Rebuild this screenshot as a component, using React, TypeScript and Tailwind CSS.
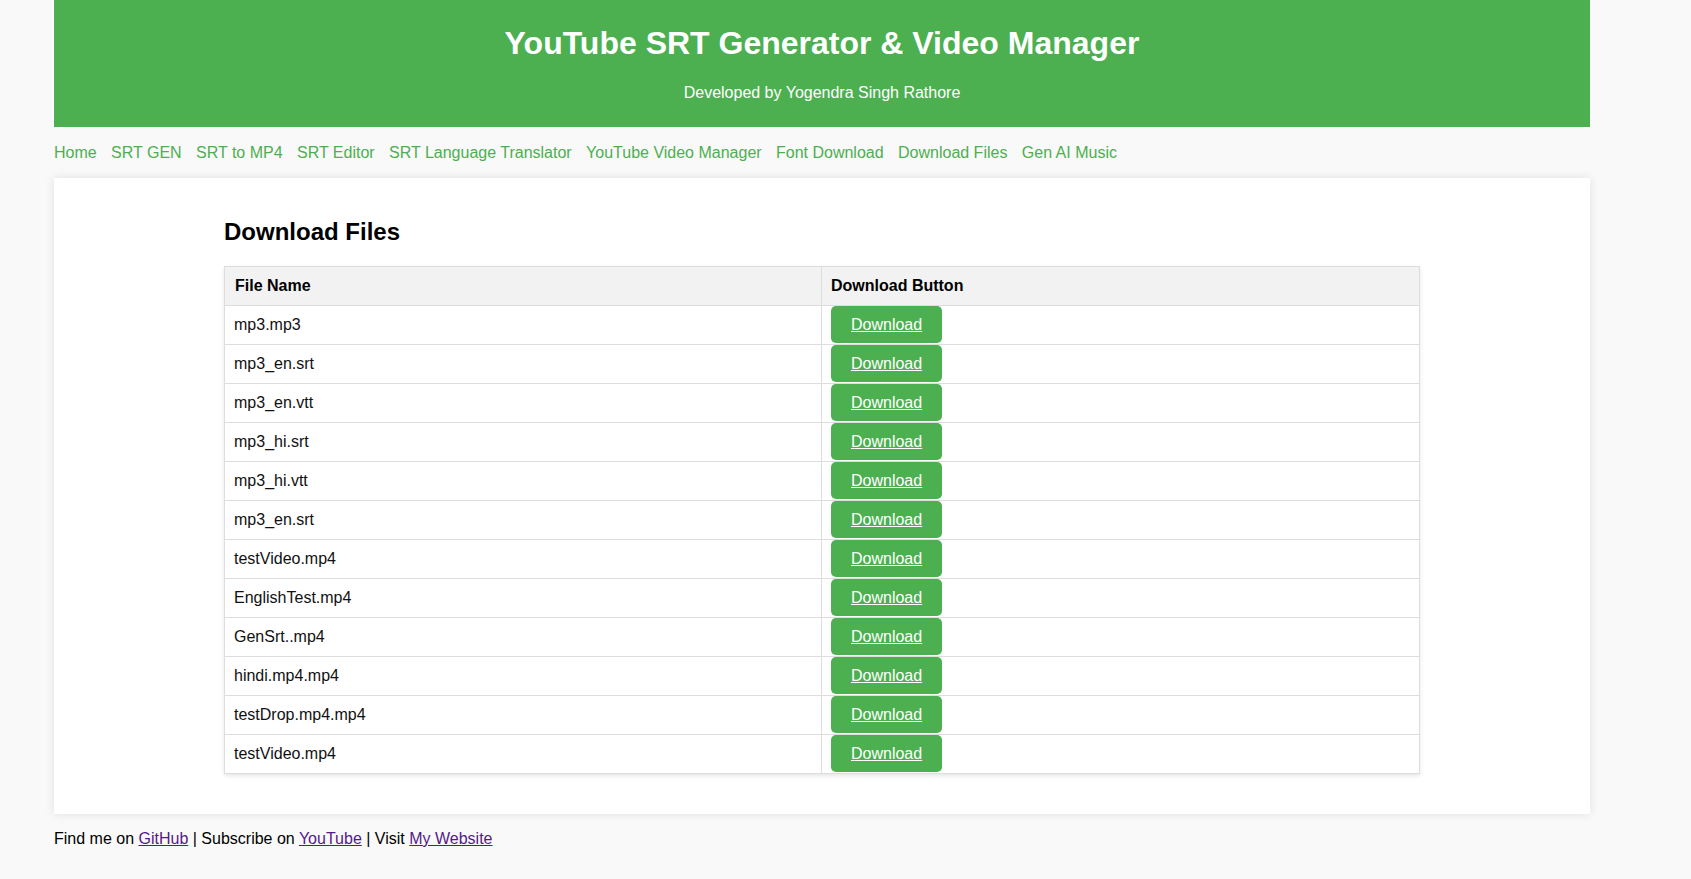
import React from "react";

const navItems = [
  "Home",
  "SRT GEN",
  "SRT to MP4",
  "SRT Editor",
  "SRT Language Translator",
  "YouTube Video Manager",
  "Font Download",
  "Download Files",
  "Gen AI Music",
];

const files = [
  "mp3.mp3",
  "mp3_en.srt",
  "mp3_en.vtt",
  "mp3_hi.srt",
  "mp3_hi.vtt",
  "mp3_en.srt",
  "testVideo.mp4",
  "EnglishTest.mp4",
  "GenSrt..mp4",
  "hindi.mp4.mp4",
  "testDrop.mp4.mp4",
  "testVideo.mp4",
];

export default function App() {
  return (
    <div
      className="min-h-[879px] bg-[#f9f9f9] text-black"
      style={{ fontFamily: '"Liberation Sans", Arial, sans-serif' }}
    >
      <div className="ml-[54px] w-[1536px]">
        <header className="flex h-[127px] flex-col items-center bg-[#4caf50] text-white">
          <h1 className="mt-[25px] text-[32px] font-bold leading-[37px]">
            YouTube SRT Generator &amp; Video Manager
          </h1>
          <p className="mt-[22px] text-[16px] leading-[18px]">
            Developed by Yogendra Singh Rathore
          </p>
        </header>

        <nav className="mt-[17px] flex h-[18px] gap-[14.4px] text-[16px] leading-[18px] text-[#4caf50]">
          {navItems.map((n) => (
            <a key={n} href="#" className="whitespace-nowrap">
              {n}
            </a>
          ))}
        </nav>

        <main className="mt-[16px] bg-white pb-[40px] pt-[40px] shadow-[0_0_10px_rgba(0,0,0,0.1)]">
          <div className="mx-auto w-[1196px]">
            <h2 className="text-[24px] font-bold leading-[28px]">Download Files</h2>
            <div className="mt-[20px] border border-[#dddddd] shadow-[0_2px_4px_rgba(0,0,0,0.1)]">
              <div className="grid h-[38px] grid-cols-2 bg-[#f2f2f2] text-[16px] font-bold leading-[18px]">
                <div className="flex items-center border-r border-[#dddddd] px-[10px]">File Name</div>
                <div className="flex items-center px-[9px]">Download Button</div>
              </div>
              {files.map((f, i) => (
                <div
                  key={i}
                  className="grid h-[39px] grid-cols-2 border-t border-[#dddddd] text-[16px] leading-[18px]"
                >
                  <div className="flex items-center border-r border-[#dddddd] px-[9px] text-[#111]">
                    {f}
                  </div>
                  <div className="px-[9px]">
                    <a
                      href="#"
                      className="inline-flex h-[37px] items-center rounded-[5px] bg-[#4caf50] px-[20px] text-white underline"
                    >
                      Download
                    </a>
                  </div>
                </div>
              ))}
            </div>
          </div>
        </main>

        <footer className="mt-[16px] text-[16px] leading-[18px]">
          Find me on{" "}
          <a href="#" className="text-[#551a8b] underline">
            GitHub
          </a>{" "}
          | Subscribe on{" "}
          <a href="#" className="text-[#551a8b] underline">
            YouTube
          </a>{" "}
          | Visit{" "}
          <a href="#" className="text-[#551a8b] underline">
            My Website
          </a>
        </footer>
      </div>
    </div>
  );
}
